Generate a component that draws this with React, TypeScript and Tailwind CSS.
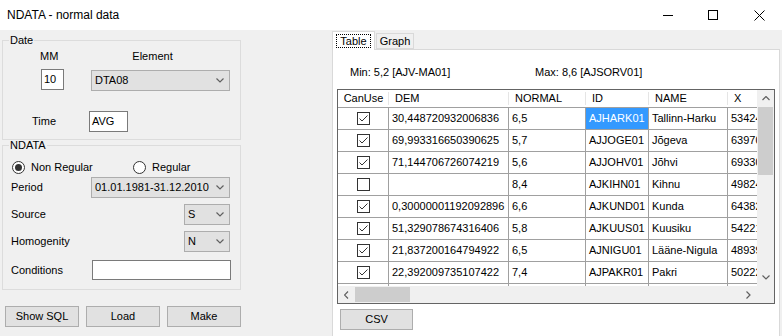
import React from "react";

const rows = [
  { use: true, dem: "30,448720932006836", normal: "6,5", id: "AJHARK01", name: "Tallinn-Harku", x: "534240" },
  { use: true, dem: "69,993316650390625", normal: "5,7", id: "AJJOGE01", name: "Jõgeva", x: "639700" },
  { use: true, dem: "71,144706726074219", normal: "5,6", id: "AJJOHV01", name: "Jõhvi", x: "693300" },
  { use: false, dem: "", normal: "8,4", id: "AJKIHN01", name: "Kihnu", x: "498240" },
  { use: true, dem: "0,30000001192092896", normal: "6,6", id: "AJKUND01", name: "Kunda", x: "643820" },
  { use: true, dem: "51,329078674316406", normal: "5,8", id: "AJKUUS01", name: "Kuusiku", x: "542210" },
  { use: true, dem: "21,837200164794922", normal: "6,5", id: "AJNIGU01", name: "Lääne-Nigula", x: "489390" },
  { use: true, dem: "22,392009735107422", normal: "7,4", id: "AJPAKR01", name: "Pakri", x: "502220" },
  { use: true, dem: "18,002000808715820", normal: "6,9", id: "AJPARN01", name: "Pärnu", x: "529500" },
];

function Chevron({ dir = "down" }: { dir?: "down" | "up" | "left" | "right" }) {
  const d = {
    down: "M0.5 0.5 L4 4 L7.5 0.5",
    up: "M0.5 4 L4 0.5 L7.5 4",
    left: "M4 0.5 L0.5 4 L4 7.5",
    right: "M0.5 0.5 L4 4 L0.5 7.5",
  }[dir];
  const horiz = dir === "down" || dir === "up";
  return (
    <svg width={horiz ? 8 : 5} height={horiz ? 5 : 8} viewBox={horiz ? "0 0 8 5" : "0 0 5 8"}>
      <path d={d} fill="none" stroke="#606060" strokeWidth={1.2} />
    </svg>
  );
}

function Combo({ value, w }: { value: string; w: string }) {
  return (
    <div className={`${w} h-[21px] flex items-center bg-[#e1e1e1] border border-[#adadad] pl-[3px] pr-[5px]`}>
      <span className="flex-1 whitespace-nowrap">{value}</span>
      <Chevron />
    </div>
  );
}

function Check({ on }: { on: boolean }) {
  return (
    <div className="w-[13px] h-[13px] border border-[#333333] bg-white flex items-center justify-center">
      {on && (
        <svg width="11" height="11" viewBox="0 0 11 11">
          <path d="M1.5 5.5 L4 8 L9.5 2.5" fill="none" stroke="#333333" strokeWidth={1} />
        </svg>
      )}
    </div>
  );
}

function Radio({ on, label }: { on: boolean; label: string }) {
  return (
    <div className="flex items-center gap-[6px]">
      <div className="w-[13px] h-[13px] rounded-full border border-[#333333] bg-white flex items-center justify-center">
        {on && <div className="w-[7px] h-[7px] rounded-full bg-[#333333]" />}
      </div>
      <span>{label}</span>
    </div>
  );
}

function Btn({ label, w = "w-[74px]" }: { label: string; w?: string }) {
  return (
    <div className={`${w} h-[21px] flex items-center justify-center bg-[#e1e1e1] border border-[#adadad]`}>{label}</div>
  );
}

const cols = ["w-[51px]", "w-[120px]", "w-[77px]", "w-[63px]", "w-[79px]", "w-[29px]"];

export default function App() {
  return (
    <div className="w-[782px] h-[336px] overflow-hidden bg-[#f0f0f0] text-[11px] leading-[13px] text-black" style={{ fontFamily: '"Liberation Sans", Arial, sans-serif' }}>
      {/* title bar */}
      <div className="h-[30px] bg-white flex items-center">
        <span className="pl-[7px] text-[12px] flex-1">NDATA - normal data</span>
        <div className="flex h-full">
          <div className="w-[45px] flex items-center justify-center">
            <div className="w-[10px] h-px bg-black" />
          </div>
          <div className="w-[46px] flex items-center justify-center">
            <div className="w-[10px] h-[10px] border border-black" />
          </div>
          <div className="w-[46px] flex items-center justify-center">
            <svg width="11" height="11" viewBox="0 0 11 11">
              <path d="M0.5 0.5 L10.5 10.5 M10.5 0.5 L0.5 10.5" stroke="black" strokeWidth={1} />
            </svg>
          </div>
        </div>
      </div>

      <div className="flex h-[306px]">
        {/* left column */}
        <div className="w-[331px] pl-[2px] pt-[4px] flex flex-col">
          <fieldset className="w-[239px] h-[106px] border border-[#dcdcdc] m-0 p-0">
            <legend className="ml-[6px] px-[1px] leading-[13px]">Date</legend>
            <div className="flex mt-[3px] h-[13px]">
              <span className="ml-[37px]">MM</span>
              <span className="ml-[74px]">Element</span>
            </div>
            <div className="flex items-start mt-[6px]">
              <div className="ml-[38px] w-[23px] h-[21px] bg-white border border-[#7a7a7a] flex items-center pl-[2px]">10</div>
              <div className="ml-[27px] mt-[1px]">
                <Combo value="DTA08" w="w-[139px]" />
              </div>
            </div>
            <div className="flex items-center mt-[20px]">
              <span className="ml-[29px] w-[57px]">Time</span>
              <div className="w-[39px] h-[21px] bg-white border border-[#7a7a7a] flex items-center pl-[2px]">AVG</div>
            </div>
          </fieldset>

          <fieldset className="w-[239px] h-[151px] -mt-px border border-[#dcdcdc] m-0 p-0">
            <legend className="ml-[6px] px-[1px] leading-[13px]">NDATA</legend>
            <div className="flex items-center mt-[9px] h-[13px] ml-[9px]">
              <div className="w-[121px]">
                <Radio on label="Non Regular" />
              </div>
              <Radio on={false} label="Regular" />
            </div>
            <div className="flex items-center mt-[3px] ml-[8px] w-[219px]">
              <span className="w-[80px]">Period</span>
              <Combo value="01.01.1981-31.12.2010" w="w-[139px]" />
            </div>
            <div className="flex items-center mt-[6px] ml-[8px] w-[219px]">
              <span className="flex-1">Source</span>
              <Combo value="S" w="w-[46px]" />
            </div>
            <div className="flex items-center mt-[6px] ml-[8px] w-[219px]">
              <span className="flex-1">Homogenity</span>
              <Combo value="N" w="w-[46px]" />
            </div>
            <div className="flex items-center mt-[8px] ml-[8px]">
              <span className="w-[81px]">Conditions</span>
              <div className="w-[139px] h-[20px] bg-white border border-[#7a7a7a]" />
            </div>
          </fieldset>

          <div className="flex gap-[7px] ml-[3px] mt-[16px]">
            <Btn label="Show SQL" />
            <Btn label="Load" />
            <Btn label="Make" />
          </div>
        </div>

        {/* right: tab control */}
        <div className="w-[449px] flex flex-col pt-[1px]">
          <div className="flex items-end h-[19px] pl-[1px] relative z-10">
            <div className="w-[43px] h-[19px] bg-white border border-b-0 border-[#d9d9d9] flex items-start justify-center pt-[2px]">
              <span className="border border-dotted border-black px-[3px] leading-[12px]">Table</span>
            </div>
            <div className="w-[38px] h-[16px] bg-[#f0f0f0] border border-[#d9d9d9] flex items-center justify-center mb-[1px] ml-px">Graph</div>
          </div>
          <div className="-mt-px ml-px w-[448px] flex-1 bg-white border border-b-0 border-[#d9d9d9] flex flex-col">
            <div className="flex mt-[16px] h-[13px]">
              <span className="ml-[17px] w-[185px]">Min: 5,2 [AJV-MA01]</span>
              <span>Max: 8,6 [AJSORV01]</span>
            </div>

            {/* grid */}
            <div className="ml-[4px] mt-[10px] w-[438px] h-[215px] border border-[#646464] flex flex-col">
              <div className="flex h-[196px]">
                <div className="w-[419px] overflow-hidden">
                  <div className="flex h-[18px] border-b border-[#a0a0a0]">
                    {["CanUse", "DEM", "NORMAL", "ID", "NAME", "X"].map((h, i) => (
                      <div key={h} className={`${cols[i]} shrink-0 flex items-center ${i === 0 ? "justify-center" : "pl-[6px]"} relative`}>
                        {h}
                        {i < 5 && <div className="absolute right-0 top-[2px] bottom-[2px] w-px bg-[#e5e5e5]" />}
                      </div>
                    ))}
                  </div>
                  {rows.map((r, ri) => (
                    <div key={r.id} className="flex h-[22px] border-b border-[#a0a0a0]">
                      <div className={`${cols[0]} shrink-0 border-r border-[#a0a0a0] flex items-center justify-center`}>
                        <Check on={r.use} />
                      </div>
                      <div className={`${cols[1]} shrink-0 border-r border-[#a0a0a0] flex items-center pl-[3px] whitespace-nowrap overflow-hidden`}>{r.dem}</div>
                      <div className={`${cols[2]} shrink-0 border-r border-[#a0a0a0] flex items-center pl-[3px]`}>{r.normal}</div>
                      <div className={`${cols[3]} shrink-0 border-r border-[#a0a0a0] flex items-center pl-[3px] ${ri === 0 ? "bg-[#3399ff] text-white" : ""}`}>{r.id}</div>
                      <div className={`${cols[4]} shrink-0 border-r border-[#a0a0a0] flex items-center pl-[3px]`}>{r.name}</div>
                      <div className={`${cols[5]} shrink-0 flex items-center pl-[3px] overflow-hidden whitespace-nowrap`}>{r.x}</div>
                    </div>
                  ))}
                </div>
                {/* vertical scrollbar */}
                <div className="w-[17px] bg-[#f0f0f0] flex flex-col items-center">
                  <div className="h-[17px] flex items-center justify-center">
                    <Chevron dir="up" />
                  </div>
                  <div className="w-[15px] h-[68px] bg-[#cdcdcd]" />
                  <div className="flex-1" />
                  <div className="h-[17px] flex items-center justify-center">
                    <Chevron dir="down" />
                  </div>
                </div>
              </div>
              {/* horizontal scrollbar */}
              <div className="flex h-[17px]">
                <div className="w-[419px] bg-[#f0f0f0] flex items-center">
                  <div className="w-[17px] h-full flex items-center justify-center">
                    <Chevron dir="left" />
                  </div>
                  <div className="w-[55px] h-[15px] bg-[#cdcdcd]" />
                  <div className="flex-1" />
                  <div className="w-[17px] h-full flex items-center justify-center">
                    <Chevron dir="right" />
                  </div>
                </div>
                <div className="w-[17px] bg-[#f0f0f0]" />
              </div>
            </div>

            <div className="ml-[7px] mt-[5px]">
              <Btn label="CSV" w="w-[73px]" />
            </div>
          </div>
        </div>
      </div>
    </div>
  );
}
